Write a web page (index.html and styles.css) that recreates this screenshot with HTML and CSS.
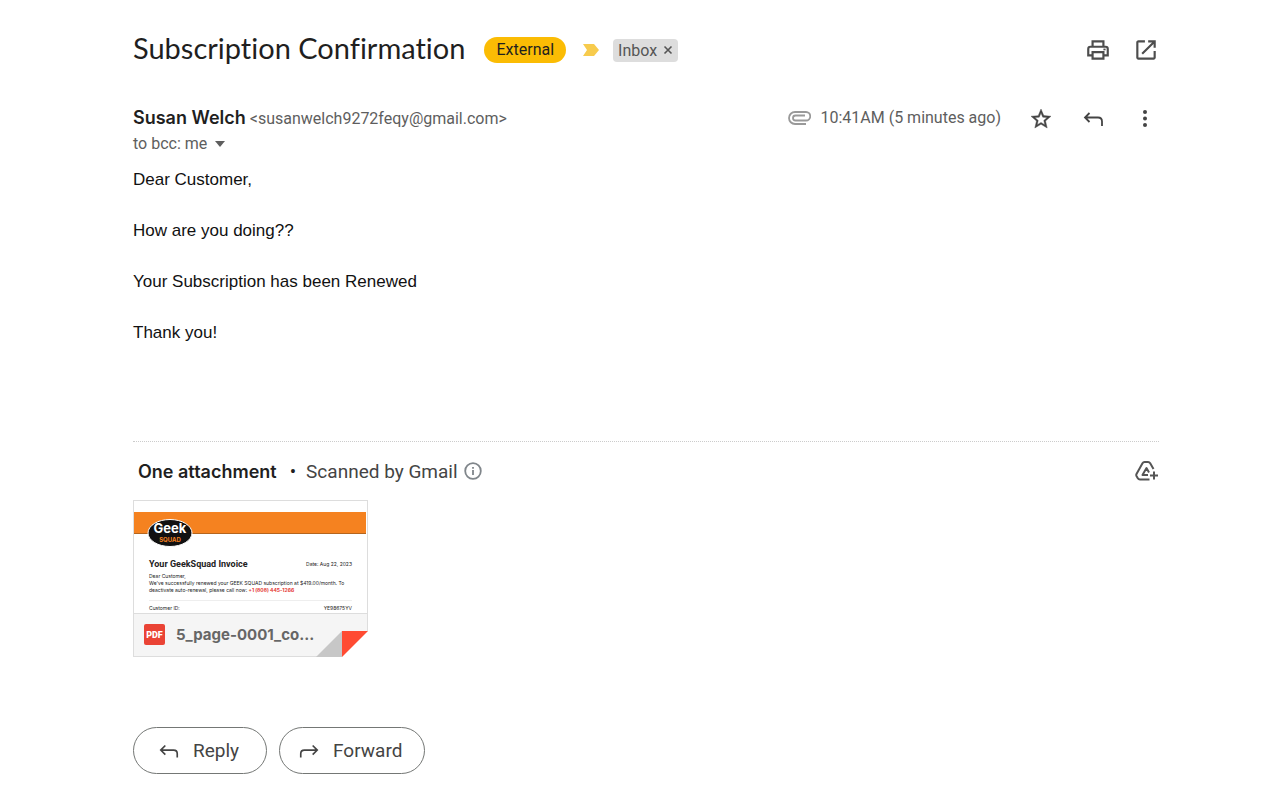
FILE: index.html
```html
<!DOCTYPE html>
<html lang="en">
<head>
    <meta charset="UTF-8">
    <meta name="viewport" content="width=device-width, initial-scale=1.0">
    <title>Subscription Confirmation</title>
    <link rel="stylesheet" href="styles.css">
</head>
<body>
    <main class="mail">
        <!-- Subject line -->
        <header class="subject">
            <h1>Subscription Confirmation</h1>
            <span class="external">External</span>
            <svg class="marker" width="18" height="14" viewBox="0 0 18 14" aria-hidden="true"><path d="M1 1h11l5 6-5 6H1l4-6z" fill="#f7cb4d"/></svg>
            <span class="label">Inbox <button class="remove" aria-label="Remove label">
                <svg width="10" height="10" viewBox="0 0 10 10"><path d="M1.500 1.500l7 7M8.500 1.500l-7 7" stroke="#555" stroke-width="1.600"/></svg>
            </button></span>
            <div class="subject-tools">
                <button class="icon-btn" aria-label="Print">
                    <svg width="26" height="26" viewBox="0 0 24 24" fill="none" stroke="#4d4d4d" stroke-width="2"><path d="M7 8V4h10v4M7 17H3v-6q0-2 2-2h14q2 0 2 2v6h-4M7 14h10v6H7z"/><path d="M17 11.500h2" stroke-width="1.600"/></svg>
                </button>
                <button class="icon-btn" aria-label="Open in new window">
                    <svg width="26" height="26" viewBox="0 0 24 24" fill="#4d4d4d"><path d="M19 19H5V5h6V3H5c-1.110 0-2 .9-2 2v14c0 1.100.89 2 2 2h14c1.100 0 2-.9 2-2v-6h-2v6zM14 3v2h3.590l-9.830 9.830 1.410 1.410L19 6.410V10h2V3h-7z"/></svg>
                </button>
            </div>
        </header>

        <!-- Sender details -->
        <section class="sender">
            <div class="from">
                <p class="from-line"><strong>Susan Welch</strong> <span class="address">&lt;susanwelch9272feqy@gmail.com&gt;</span></p>
                <button class="to-line">to bcc: me <svg width="10" height="6" viewBox="0 0 10 6" aria-hidden="true"><path d="M0 0h10L5 6z" fill="#5e5e5e"/></svg></button>
            </div>
            <div class="meta">
                <svg width="23" height="14" viewBox="0 0 23 14" fill="none" stroke="#999" stroke-width="1.800" aria-hidden="true"><path d="M18 13H7A6 6 0 0 1 7 1h11a4 4 0 0 1 0 8.500H7.500a2.500 2.500 0 0 1 0-5H17"/></svg>
                <time>10:41AM (5 minutes ago)</time>
            </div>
            <div class="sender-tools">
                <button class="icon-btn" aria-label="Star">
                    <svg width="24" height="24" viewBox="0 0 24 24" fill="#444" stroke="#444" stroke-width="0.400"><path d="M22 9.240l-7.190-.62L12 2 9.190 8.630 2 9.240l5.460 4.730L5.820 21 12 17.270 18.180 21l-1.630-7.030L22 9.240zM12 15.400l-3.760 2.270 1-4.280-3.320-2.880 4.380-.38L12 6.100l1.710 4.040 4.380.38-3.320 2.880 1 4.280L12 15.400z"/></svg>
                </button>
                <button class="icon-btn" aria-label="Reply">
                    <svg width="24" height="24" viewBox="0 0 24 24" fill="none" stroke="#444" stroke-width="1.800"><path d="M8.500 6L4 10.500 8.500 15M4.500 10.500H17q4 0 4 4V19"/></svg>
                </button>
                <button class="icon-btn" aria-label="More">
                    <svg width="24" height="24" viewBox="0 0 24 24" fill="#444"><circle cx="12" cy="5" r="2"/><circle cx="12" cy="11.500" r="2"/><circle cx="12" cy="18" r="2"/></svg>
                </button>
            </div>
        </section>

        <!-- Message -->
        <article class="message">
            <p>Dear Customer,</p>
            <p>How are you doing??</p>
            <p>Your Subscription has been Renewed</p>
            <p>Thank you!</p>
        </article>

        <!-- Attachment -->
        <section class="attachments">
            <div class="attachments-head">
                <h2>One attachment</h2>
                <span class="dot">•</span>
                <span class="scanned">Scanned by Gmail</span>
                <svg width="18" height="18" viewBox="0 0 18 18" fill="none" stroke="#80868b" stroke-width="1.800" aria-hidden="true"><circle cx="9" cy="9" r="7.800"/><path d="M9 8v5M9 5v1.800"/></svg>
                <button class="icon-btn drive" aria-label="Add to Drive">
                    <svg width="24" height="24" viewBox="0 0 24 24" fill="none" stroke="#555" stroke-width="2" stroke-linejoin="round"><path d="M14.500 20.500H5q-1.500 0-2.200-1.200L1.500 17q-.5-1 0-2L7.500 4.200Q8.200 3 9.500 3h3.500q1.500 0 2.200 1.200L18.500 10"/><path d="M13 16H7.500L11.500 9l2.500 4.500" stroke-width="2"/><path d="M19 12.500v8M15 16.500h8"/></svg>
                </button>
            </div>
            <a class="file" href="#">
                <div class="preview">
                    <div class="banner"></div>
                    <svg class="brand" width="46" height="30" viewBox="0 0 46 30" aria-label="Geek Squad">
                        <ellipse cx="23" cy="15" rx="22" ry="13.500" fill="#111" stroke="#fff" stroke-width="1"/>
                        <text x="23" y="15" text-anchor="middle" class="brand-top">Geek</text>
                        <text x="23" y="24" text-anchor="middle" class="brand-bottom">SQUAD</text>
                    </svg>
                    <div class="invoice">
                        <div class="invoice-row"><b class="invoice-title">Your GeekSquad Invoice</b><span>Date: Aug 22, 2023</span></div>
                        <p class="invoice-text">Dear Customer,<br>We've successfully renewed your GEEK SQUAD subscription at $419.00/month. To<br>deactivate auto-renewal, please call now: <b class="phone">+1 (808) 445-1266</b></p>
                        <div class="invoice-row customer"><span>Customer ID:</span><span>YE98675YV</span></div>
                    </div>
                </div>
                <div class="file-bar">
                    <svg width="21" height="21" viewBox="0 0 21 21" aria-hidden="true"><rect width="21" height="21" rx="2" fill="#ea4335"/><text x="10.500" y="14" text-anchor="middle" class="pdf">PDF</text></svg>
                    <span class="file-name">5_page-0001_co...</span>
                </div>
                <svg class="fold" width="52" height="27" viewBox="0 0 52 27" aria-hidden="true"><path d="M26 27V1h26v26z" fill="#fff"/><path d="M0 27L26 1v26z" fill="#c7c7c7"/><path d="M26 1h26L26 27z" fill="#ff4b32"/></svg>
            </a>
        </section>

        <!-- Actions -->
        <footer class="actions">
            <button class="action-btn">
                <svg width="22" height="22" viewBox="0 0 24 24" fill="none" stroke="#444" stroke-width="1.800" aria-hidden="true"><path d="M8 6l-5 5 5 5M3.500 11H17q4 0 4 4v4"/></svg>
                Reply
            </button>
            <button class="action-btn forward">
                <svg width="22" height="22" viewBox="0 0 24 24" fill="none" stroke="#444" stroke-width="1.800" aria-hidden="true"><path d="M16 6l5 5-5 5M20.500 11H7q-4 0-4 4v4"/></svg>
                Forward
            </button>
        </footer>
    </main>
</body>
</html>
```

FILE: styles.css
```css
* {
    box-sizing: border-box;
}

body {
    margin: 0;
    background-color: #fff;
    color: #1f1f1f;
    font-family: Roboto, "Liberation Sans", sans-serif;
    font-size: 16px;
}

h1, h2, p {
    margin: 0;
}

button {
    padding: 0;
    border: none;
    background: none;
    font-family: inherit;
    color: inherit;
    cursor: pointer;
}

svg {
    display: block;
    flex: none;
}

.mail {
    padding: 32px 121px 12px 133px;
}

.subject {
    display: flex;
    align-items: center;
    height: 36px;
}

.subject h1 {
    padding-bottom: 4px;
    font-family: Lato, sans-serif;
    font-size: 29px;
    font-weight: 400;
    line-height: 32px;
    font-variant-ligatures: none;
}

.external {
    margin-left: 19px;
    padding: 0 12px;
    border-radius: 13px;
    background-color: #fbbc04;
    line-height: 26px;
}

.marker {
    margin-left: 16px;
}

.label {
    display: flex;
    align-items: center;
    gap: 6px;
    margin-left: 13px;
    padding: 0 5px;
    border-radius: 4px;
    background-color: #ddd;
    color: #555;
    line-height: 23px;
}

.subject-tools {
    display: flex;
    gap: 22px;
    margin-left: auto;
}

.sender {
    display: flex;
    align-items: flex-start;
    margin-top: 36px;
}

.from-line {
    line-height: 28px;
}

.from-line strong {
    font-family: Inter, sans-serif;
    font-size: 18px;
    font-weight: 600;
}

.address,
.to-line,
.meta {
    color: #5e5e5e;
    font-size: 16px;
}

.to-line {
    display: flex;
    align-items: center;
    gap: 8px;
    line-height: 22px;
}

.meta {
    display: flex;
    align-items: center;
    gap: 9px;
    margin-left: auto;
    line-height: 28px;
}

.sender-tools {
    display: flex;
    gap: 28px;
    margin: 3px 2px 0 28px;
}

.message {
    margin-top: 12px;
    padding-bottom: 96px;
    border-bottom: 1px dotted #ccc;
    color: #111;
    font-family: "Liberation Sans", Arial, sans-serif;
    font-size: 17px;
    line-height: 25px;
}

.message p + p {
    margin-top: 26px;
}

.attachments-head {
    display: flex;
    align-items: center;
    height: 58px;
    padding-left: 5px;
    font-size: 19px;
}

.attachments-head h2 {
    font-family: Inter, sans-serif;
    font-size: 18px;
    font-weight: 600;
}

.dot {
    margin: 0 10px 0 13px;
    font-size: 19px;
}

.scanned {
    margin-right: 6px;
    color: #444;
}

.drive {
    margin-left: auto;
}

.file {
    position: relative;
    display: block;
    width: 235px;
    border: 1px solid #ddd;
    color: #222;
    text-decoration: none;
}

.preview {
    position: relative;
    height: 112px;
    padding-top: 11px;
    overflow: hidden;
}

.banner {
    height: 22px;
    margin-right: 1px;
    border-bottom: 1px solid #b5651d;
    background-color: #f58220;
}

.brand {
    position: absolute;
    top: 17px;
    left: 13px;
}

.brand-top {
    fill: #fff;
    font: 700 13px Inter, sans-serif;
}

.brand-bottom {
    fill: #f58220;
    font: 700 6px Inter, sans-serif;
}

.invoice {
    padding: 24px 15px 0;
    font-family: Inter, sans-serif;
    font-size: 5px;
    line-height: 7px;
}

.invoice-row {
    display: flex;
    align-items: center;
    justify-content: space-between;
}

.invoice-title {
    font-family: Roboto, sans-serif;
    font-size: 9px;
    line-height: 12px;
}

.invoice-text {
    margin-top: 3px;
    white-space: nowrap;
}

.phone {
    color: #e53935;
}

.customer {
    margin-top: 6px;
    padding-top: 4px;
    border-top: 1px solid #eee;
}

.file-bar {
    display: flex;
    align-items: center;
    gap: 11px;
    height: 43px;
    padding: 0 0 2px 10px;
    border-top: 1px solid #ddd;
    background-color: #f5f5f5;
}

.pdf {
    fill: #fff;
    font: 900 9px Roboto, sans-serif;
}

.file-name {
    color: #666;
    font-family: Inter, sans-serif;
    font-size: 15px;
    font-weight: 700;
}

.fold {
    position: absolute;
    right: -1px;
    bottom: -1px;
}

.actions {
    display: flex;
    gap: 12px;
    margin-top: 70px;
}

.action-btn {
    display: flex;
    align-items: center;
    gap: 13px;
    height: 47px;
    padding: 0 27px 0 24px;
    border: 1px solid #747775;
    border-radius: 24px;
    color: #444;
    font-size: 19px;
}

.forward {
    padding: 0 22px 0 18px;
}
```
